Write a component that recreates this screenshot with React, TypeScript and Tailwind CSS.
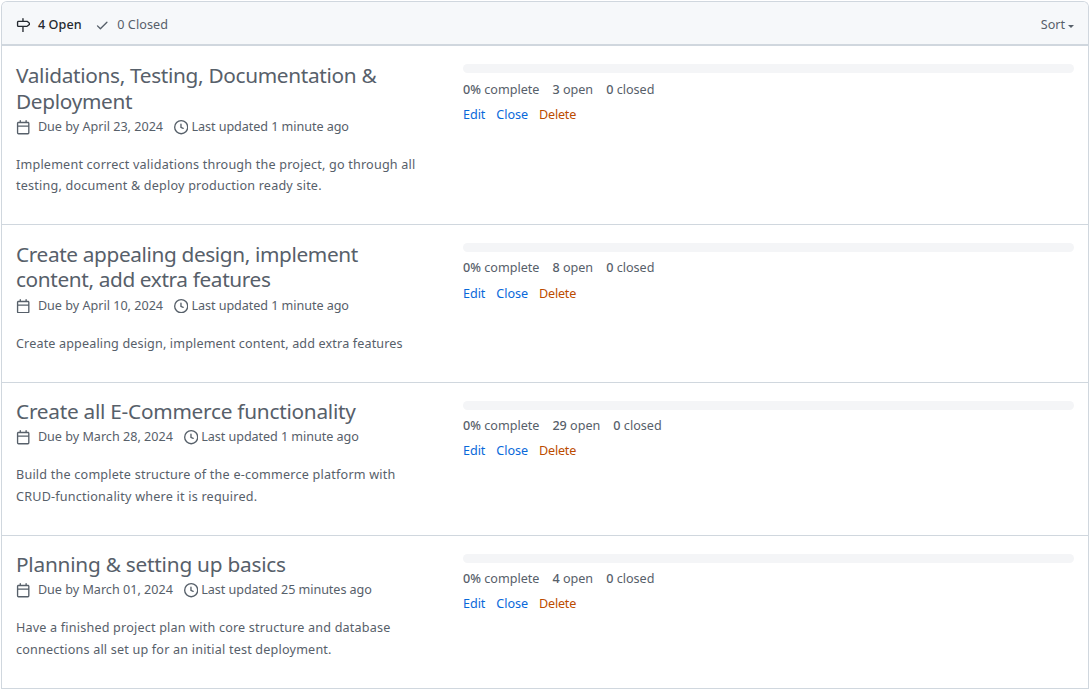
type Milestone = {
  title: string[];
  titleClass: string;
  due: string;
  updated: string;
  metaClass: string;
  description: string[];
  descriptionClass: string;
  open: number;
  height: string;
  statsClass: string;
  actionsClass: string;
};

const milestones: Milestone[] = [
  {
    title: ["Validations, Testing, Documentation &", "Deployment"],
    titleClass: "pt-[16px] leading-[26px] tracking-[-0.32px]",
    due: "April 23, 2024",
    updated: "1 minute ago",
    metaClass: "mt-px h-[25px]",
    description: [
      "Implement correct validations through the project, go through all",
      "testing, document & deploy production ready site.",
    ],
    descriptionClass: "leading-[21px] tracking-[0.2px]",
    open: 3,
    height: "h-[179px]",
    statsClass: "mt-[7px]",
    actionsClass: "mt-[4px]",
  },
  {
    title: ["Create appealing design, implement", "content, add extra features"],
    titleClass: "pt-[17px] leading-[25px] tracking-[-0.37px]",
    due: "April 10, 2024",
    updated: "1 minute ago",
    metaClass: "mt-px h-[26px]",
    description: ["Create appealing design, implement content, add extra features"],
    descriptionClass: "leading-[22px] tracking-[0.14px]",
    open: 8,
    height: "h-[158px]",
    statsClass: "mt-[6px]",
    actionsClass: "mt-[5px]",
  },
  {
    title: ["Create all E-Commerce functionality"],
    titleClass: "pt-[15px] leading-[26px] tracking-[-0.26px]",
    due: "March 28, 2024",
    updated: "1 minute ago",
    metaClass: "mt-px h-[25px]",
    description: [
      "Build the complete structure of the e-commerce platform with",
      "CRUD-functionality where it is required.",
    ],
    descriptionClass: "leading-[21.6px] tracking-[0.21px]",
    open: 29,
    height: "h-[153px]",
    statsClass: "mt-[6px]",
    actionsClass: "mt-[4px]",
  },
  {
    title: ["Planning & setting up basics"],
    titleClass: "pt-[15px] leading-[26px] tracking-[-0.23px]",
    due: "March 01, 2024",
    updated: "25 minutes ago",
    metaClass: "mt-px h-[25px]",
    description: [
      "Have a finished project plan with core structure and database",
      "connections all set up for an initial test deployment.",
    ],
    descriptionClass: "leading-[21.6px] tracking-[0.19px]",
    open: 4,
    height: "h-[153px]",
    statsClass: "mt-[6px]",
    actionsClass: "mt-[4px]",
  },
];

const icons = {
  milestone:
    "M7.75 0a.75.75 0 0 1 .75.75V3h3.634c.414 0 .814.147 1.13.414l2.07 1.75a1.75 1.75 0 0 1 0 2.672l-2.07 1.75a1.75 1.75 0 0 1-1.13.414H8.5v5.25a.75.75 0 0 1-1.5 0V10H2.75A1.75 1.75 0 0 1 1 8.25v-3.5C1 3.784 1.784 3 2.75 3H7V.75A.75.75 0 0 1 7.75 0Zm4.384 8.5a.25.25 0 0 0 .161-.06l2.07-1.75a.248.248 0 0 0 0-.38l-2.07-1.75a.25.25 0 0 0-.161-.06H2.75a.25.25 0 0 0-.25.25v3.5c0 .138.112.25.25.25h9.384Z",
  check:
    "M13.78 4.22a.75.75 0 0 1 0 1.06l-7.25 7.25a.75.75 0 0 1-1.06 0L2.22 9.28a.751.751 0 0 1 .018-1.042.751.751 0 0 1 1.042-.018L6 10.94l6.72-6.72a.75.75 0 0 1 1.06 0Z",
  calendar:
    "M4.75 0a.75.75 0 0 1 .75.75V2h5V.75a.75.75 0 0 1 1.5 0V2h1.25c.966 0 1.75.784 1.75 1.75v10.5A1.75 1.75 0 0 1 13.25 16H2.75A1.75 1.75 0 0 1 1 14.25V3.75C1 2.784 1.784 2 2.75 2H4V.75A.75.75 0 0 1 4.75 0ZM2.5 7.5v6.75c0 .138.112.25.25.25h10.5a.25.25 0 0 0 .25-.25V7.5Zm10.75-4H2.75a.25.25 0 0 0-.25.25V6h11V3.75a.25.25 0 0 0-.25-.25Z",
  clock:
    "M8 0a8 8 0 1 1 0 16A8 8 0 0 1 8 0ZM1.5 8a6.5 6.5 0 1 0 13 0 6.5 6.5 0 0 0-13 0Zm7-3.25v2.992l2.028.812a.75.75 0 0 1-.557 1.392l-2.5-1A.751.751 0 0 1 7 8.25v-3.5a.75.75 0 0 1 1.5 0Z",
};

function Icon({ name, className = "" }: { name: keyof typeof icons; className?: string }) {
  return (
    <svg viewBox="0 0 16 16" fill="currentColor" aria-hidden="true" className={`size-[14.4px] shrink-0 ${className}`}>
      <path d={icons[name]} />
    </svg>
  );
}

function MilestoneRow({ item }: { item: Milestone }) {
  return (
    <li className={`flex border-b border-[#d0d7de] px-[14px] ${item.height}`}>
      <div className="w-[447px] shrink-0 whitespace-nowrap">
        <h2 className={`text-[20.8px] ${item.titleClass}`}>
          {item.title.map((line) => (
            <span key={line} className="block">{line}</span>
          ))}
        </h2>
        <div className={`flex items-center ${item.metaClass}`}>
          <Icon name="calendar" />
          <span className="ml-[7.5px]">Due by {item.due}</span>
          <Icon name="clock" className="ml-[11px]" />
          <span className="ml-[3px] tracking-[-0.06px]">Last updated {item.updated}</span>
        </div>
        <p className={`mt-[14px] ${item.descriptionClass}`}>
          {item.description.map((line) => (
            <span key={line} className="block">{line}</span>
          ))}
        </p>
      </div>
      <div className="flex-1 pt-[18px]">
        <div className="h-[9px] rounded-full bg-[#f4f5f7]" />
        <div className={`flex h-[21px] items-center gap-[13px] ${item.statsClass}`}>
          <span><b className="font-medium">0%</b> complete</span>
          <span><b className="font-medium">{item.open}</b> open</span>
          <span><b className="font-medium">0</b> closed</span>
        </div>
        <div className={`flex h-[21px] items-center gap-[11px] tracking-[-0.06px] text-[#0969da] ${item.actionsClass}`}>
          <a href="#edit">Edit</a>
          <a href="#close">Close</a>
          <a href="#delete" className="tracking-[-0.2px] text-[#bc4c00]">Delete</a>
        </div>
      </div>
    </li>
  );
}

export default function App() {
  return (
    <div className="h-[690px] w-[1090px] bg-white pl-px pt-px font-['Noto_Sans',sans-serif] text-[12.6px] text-[#57606a]">
      <main className="h-[688px] w-[1088px] overflow-hidden rounded-t-[6px] border-x border-t border-[#d0d7de]">
        <header className="flex h-[44px] items-center border-b-2 border-[#d0d7de] bg-[#f6f8fa] px-[14px] pt-[4px]">
          <Icon name="milestone" className="text-[#24292f]" />
          <span className="ml-[7.5px] font-medium tracking-[0.1px] text-[#24292f]">4 Open</span>
          <Icon name="check" className="ml-[13px]" />
          <span className="ml-[8px] tracking-[0.1px]">0 Closed</span>
          <button className="ml-auto flex items-center">
            Sort
            <span className="ml-[3px] mt-[3px] border-x-[3px] border-t-[3px] border-x-transparent border-t-current" />
          </button>
        </header>
        <ul>
          {milestones.map((item) => (
            <MilestoneRow key={item.due} item={item} />
          ))}
        </ul>
      </main>
    </div>
  );
}
